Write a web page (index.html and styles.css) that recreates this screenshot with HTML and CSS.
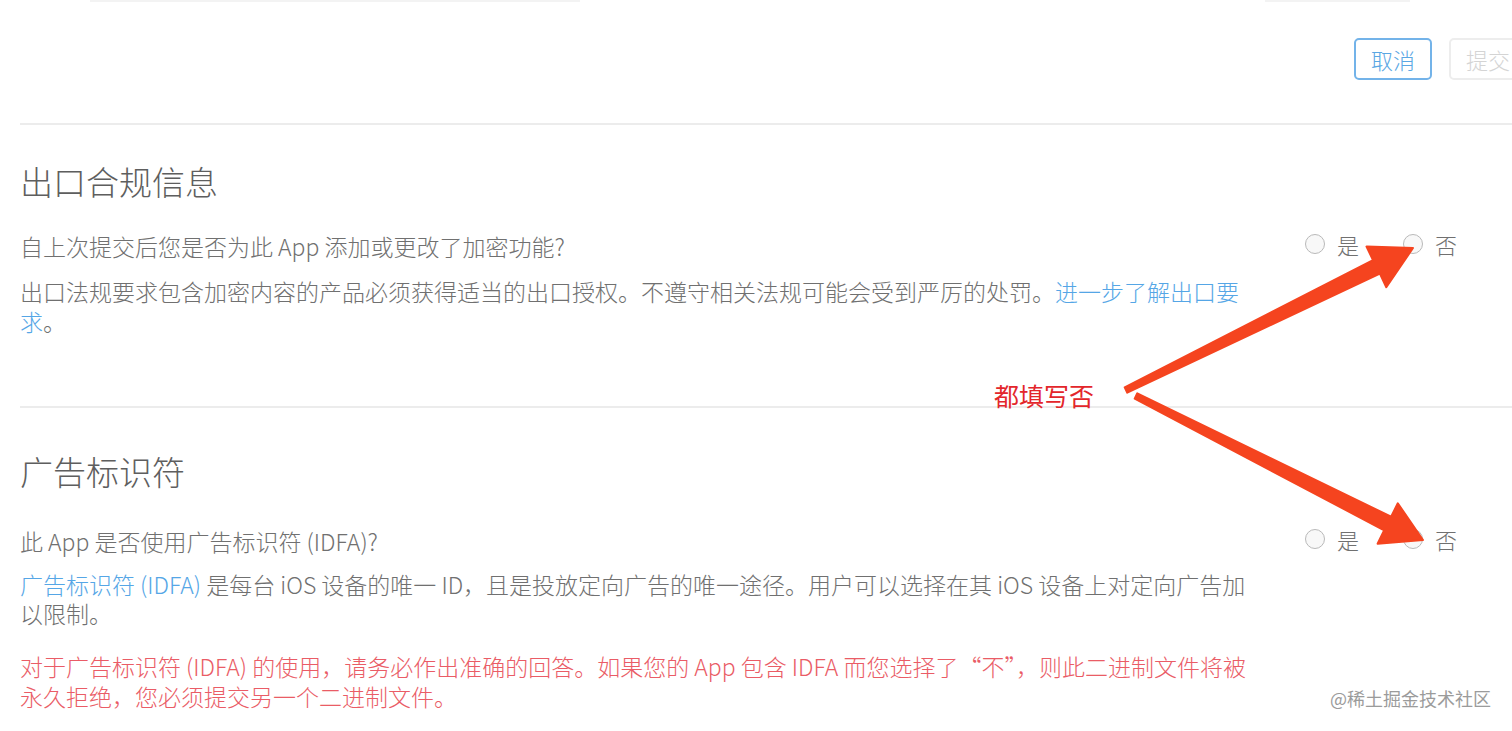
FILE: index.html
```html
<!DOCTYPE html>
<html lang="zh-CN">
<head>
<meta charset="utf-8">
<title>出口合规信息</title>
<link rel="stylesheet" href="styles.css">
</head>
<body>
<div class="page">
  <div class="topfrag"><span class="frag frag-a"></span><span class="frag frag-b"></span></div>
  <div class="toolbar">
    <button class="btn btn-cancel">取消</button>
    <button class="btn btn-submit">提交</button>
  </div>

  <section class="section section-first">
    <h2 class="title">出口合规信息</h2>
    <div class="qrow">
      <div class="question">自上次提交后您是否为此 App 添加或更改了加密功能?</div>
      <div class="radios">
        <span class="radio"></span><span class="rlabel">是</span>
        <span class="radio"></span><span class="rlabel">否</span>
      </div>
    </div>
    <p class="desc">出口法规要求包含加密内容的产品必须获得适当的出口授权。不遵守相关法规可能会受到严厉的处罚。<a class="link">进一步了解出口要求</a>。</p>
  </section>

  <section class="section section-second">
    <h2 class="title">广告标识符</h2>
    <div class="qrow">
      <div class="question">此 App 是否使用广告标识符 (IDFA)?</div>
      <div class="radios">
        <span class="radio"></span><span class="rlabel">是</span>
        <span class="radio"></span><span class="rlabel">否</span>
      </div>
    </div>
    <p class="desc desc-tight"><a class="link">广告标识符 (IDFA)</a> 是每台 iOS 设备的唯一 ID，且是投放定向广告的唯一途径。用户可以选择在其 iOS 设备上对定向广告加以限制。</p>
    <p class="desc warn">对于广告标识符 (IDFA) 的使用，请务必作出准确的回答。如果您的 App 包含 IDFA 而您选择了“不”，则此二进制文件将被永久拒绝，您必须提交另一个二进制文件。</p>
  </section>
</div>

<div class="note">都填写否</div>
<svg class="arrows" width="1512" height="731" viewBox="0 0 1512 731" xmlns="http://www.w3.org/2000/svg">
  <polygon fill="#f5441f" stroke="#f5441f" stroke-width="2" stroke-linejoin="round"
    points="1124.7,387.3 1373,260.1 1366.5,246.6 1413,248 1386.3,287.3 1379.9,273.6 1127.3,392.7"/>
  <polygon fill="#f5441f" stroke="#f5441f" stroke-width="2" stroke-linejoin="round"
    points="1137.3,393.3 1391.1,516.7 1397.8,503.3 1423,540 1377.6,543.7 1384.2,530.3 1134.7,398.7"/>
</svg>
<div class="watermark">@稀土掘金技术社区</div>
</body>
</html>
```
FILE: styles.css
```css
html, body {
  margin: 0;
  padding: 0;
  background: #ffffff;
  overflow: hidden;
}
body {
  width: 1512px;
  height: 731px;
  position: relative;
  font-family: "Noto Sans CJK SC", "Noto Sans", sans-serif;
  font-weight: 300;
  color: #747474;
}
.page {
  width: 1527px;
  padding-left: 20px;
  box-sizing: border-box;
}
.topfrag {
  height: 3px;
  display: flex;
  margin-left: 70px;
}
.frag {
  display: block;
  height: 2px;
  background: #f3f3f3;
}
.frag-a { width: 490px; }
.frag-b { width: 145px; margin-left: 685px; }

.toolbar {
  display: flex;
  justify-content: flex-end;
  gap: 17px;
  padding-top: 35px;
  box-sizing: border-box;
  border-bottom: 2px solid #ececec;
  height: 122px;
}
.btn {
  width: 78px;
  height: 42px;
  border-radius: 5px;
  background: #fff;
  font-family: "Noto Sans CJK SC", sans-serif;
  font-weight: 300;
  font-size: 22px;
  line-height: 1;
  padding: 0;
  box-sizing: border-box;
}
.btn-cancel {
  border: 2px solid #73b3e9;
  color: #5aa7e4;
}
.btn-submit {
  border: 2px solid #ededed;
  color: #d4d4d4;
}

.section {
  width: 1492px;
}
.section-first {
  padding-top: 36px;
  padding-bottom: 70px;
  border-bottom: 2px solid #ececec;
}
.section-second {
  padding-top: 43px;
}
.title {
  margin: 0;
  font-size: 33px;
  line-height: 40px;
  font-weight: 300;
  color: #5e5e5e;
}
.qrow {
  display: grid;
  grid-template-columns: 1285px auto;
  align-items: center;
  margin-top: 30px;
}
.section-second .qrow {
  margin-top: 35px;
}
.question {
  font-size: 23px;
  line-height: 30px;
  color: #707070;
}
.radios {
  display: flex;
  align-items: center;
  margin-top: -4px;
}
.radio {
  width: 20px;
  height: 20px;
  border: 1.5px solid #b9b9b9;
  border-radius: 50%;
  background: #f8f8f8;
  box-sizing: border-box;
  margin-right: 12px;
}
.rlabel {
  font-size: 22px;
  line-height: 30px;
  color: #707070;
  margin-right: 44px;
}
.desc {
  width: 1236px;
  margin: 15px 0 0 0;
  font-size: 23px;
  line-height: 30px;
  color: #707070;
}
.desc-tight {
  margin-top: 14px;
  line-height: 29px;
}
.link {
  color: #55a6e6;
}
.warn {
  margin-top: 23px;
  color: #ea5c66;
}

.note {
  position: absolute;
  left: 994px;
  top: 379px;
  font-size: 25px;
  line-height: 32px;
  font-weight: 400;
  color: #e3262b;
}
.arrows {
  position: absolute;
  left: 0;
  top: 0;
}
.watermark {
  position: absolute;
  left: 1330px;
  top: 686px;
  font-size: 18px;
  line-height: 24px;
  font-weight: 400;
  color: #9b9b9b;
}
```
